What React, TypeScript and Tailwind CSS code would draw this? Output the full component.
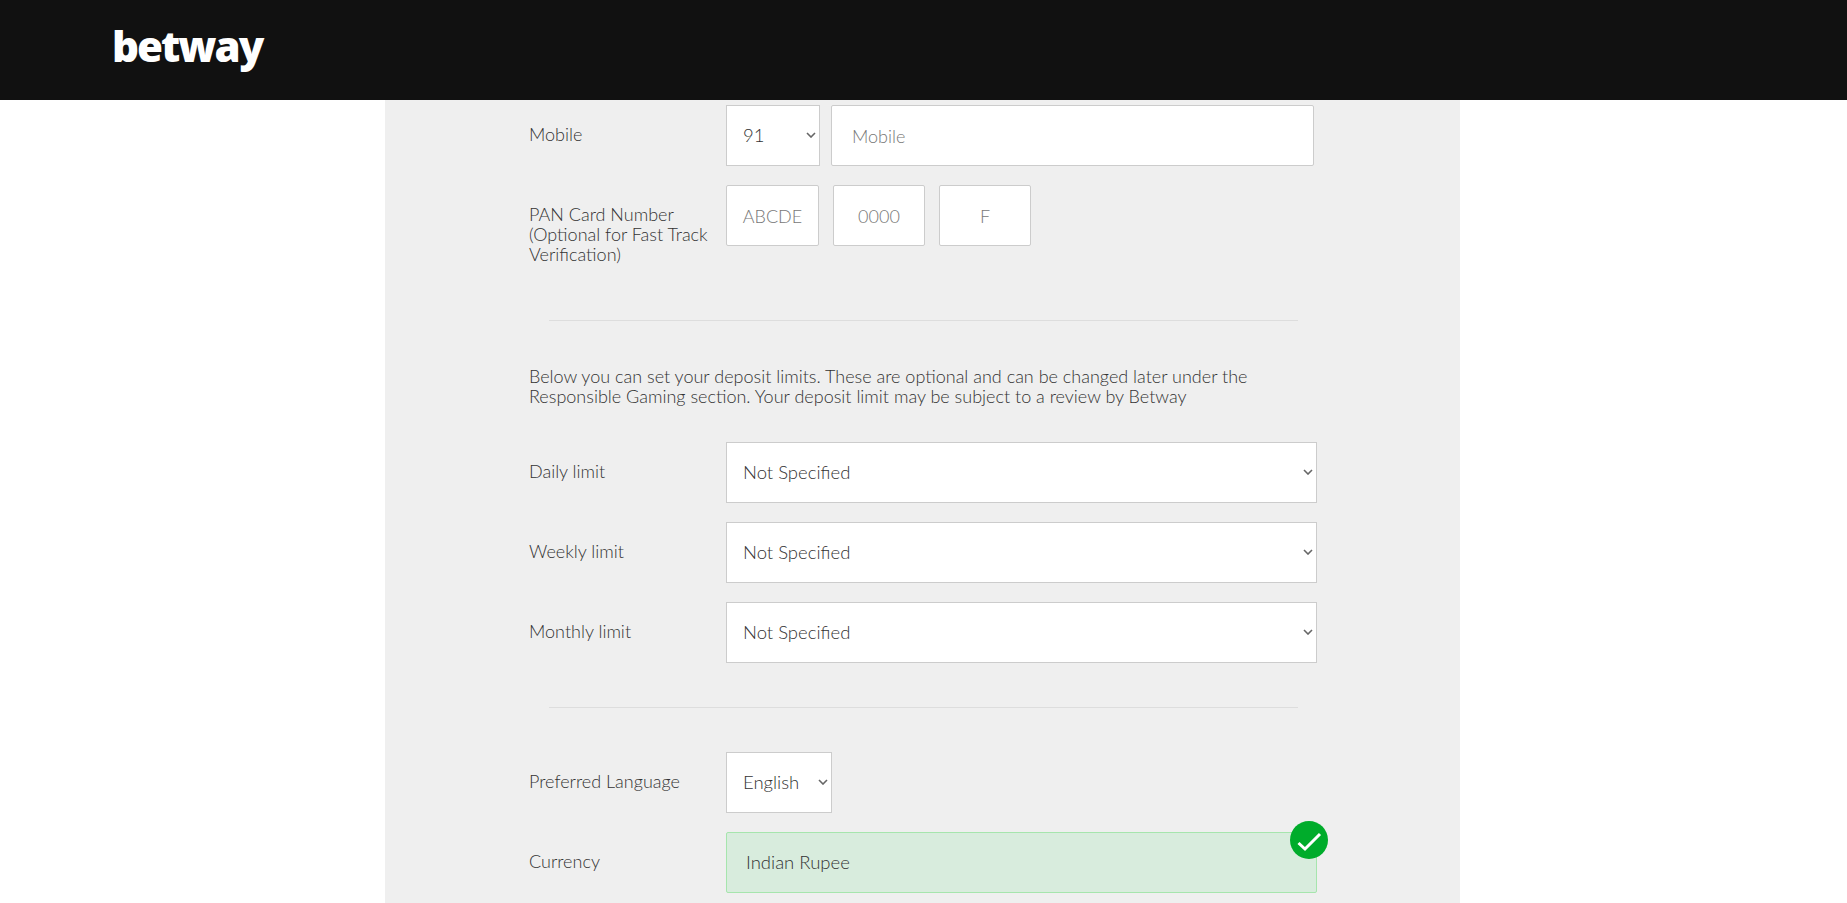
const fieldFont = "[font-family:'Lato',sans-serif] font-light";

const Field = ({ label, children }: { label: React.ReactNode; children: React.ReactNode }) => (
  <div className="flex mb-[19px]">
    <label className="w-[197px] shrink-0 pt-[19px] text-[18px] leading-[20px] text-[#333]">{label}</label>
    {children}
  </div>
);

const NativeSelect = ({ value, className }: { value: string; className: string }) => (
  <div className={`relative h-[61px] ${className}`}>
    <select
      defaultValue={value}
      className="w-full h-full appearance-none bg-white border border-[#ccc] pl-[16px] text-[18.5px] text-[#333] font-light"
    >
      <option>{value}</option>
    </select>
    <svg viewBox="0 0 10 6" className="absolute right-[4px] top-[27px] w-[10px] h-[6px]" fill="none" stroke="#666" strokeWidth="1.6">
      <path d="M1 1 L5 5 L9 1" />
    </svg>
  </div>
);

const TextInput = ({ placeholder, className }: { placeholder: string; className: string }) => (
  <input
    placeholder={placeholder}
    className={`h-[61px] bg-white border border-[#ccc] rounded-[2px] text-[18px] font-light text-[#333] placeholder:text-[#777] ${className}`}
  />
);

const App = () => {
  return (
    <div className={`h-[903px] overflow-hidden bg-white ${fieldFont}`}>
      <header className="h-[100px] bg-[#111] pl-[112px] pt-[16px]">
        <span className="block [font-family:'Noto_Sans',sans-serif] text-[42px] leading-[60px] font-black tracking-[-2px] text-white">betway</span>
      </header>

      <main className="ml-[385px] w-[1075px] h-[803px] bg-[#efefef] pl-[144px] pt-[5px]">
        <Field label="Mobile">
          <NativeSelect value="91" className="w-[94px]" />
          <TextInput placeholder="Mobile" className="ml-[11px] w-[483px] px-[20px]" />
        </Field>

        <Field label={<>PAN Card Number<br />(Optional for Fast Track<br />Verification)</>}>
          <div className="flex gap-[14px]">
            <TextInput placeholder="ABCDE" className="w-[93px] text-center" />
            <TextInput placeholder="0000" className="w-[92px] text-center" />
            <TextInput placeholder="F" className="w-[92px] text-center" />
          </div>
        </Field>

        <hr className="ml-[20px] w-[749px] mt-[56px] border-[#ddd]" />

        <p className="mt-[45px] w-[780px] text-[18px] leading-[20px] text-[#333]">
          Below you can set your deposit limits. These are optional and can be changed later under the<br />
          Responsible Gaming section. Your deposit limit may be subject to a review by Betway
        </p>

        <div className="mt-[36px]">
          {["Daily limit", "Weekly limit", "Monthly limit"].map((label) => (
            <Field key={label} label={label}>
              <NativeSelect value="Not Specified" className="w-[591px]" />
            </Field>
          ))}
        </div>

        <hr className="ml-[20px] w-[749px] mt-[44px] border-[#ddd]" />

        <div className="mt-[44px]">
          <Field label="Preferred Language">
            <NativeSelect value="English" className="w-[106px]" />
          </Field>
          <Field label="Currency">
            <div className="relative w-[591px] h-[61px] flex items-center pl-[19px] bg-[#d8ecdd] border border-[#a6e5ad] rounded-[2px] text-[18.5px] text-[#333]">
              Indian Rupee
              <span className="absolute -top-[12px] -right-[12px] w-[38px] h-[38px] rounded-full bg-[#00ac2b]">
                <svg viewBox="0 0 38 38" className="w-full h-full" fill="none" stroke="white" strokeWidth="3">
                  <path d="M8.5 22 L15 28 L30 13" />
                </svg>
              </span>
            </div>
          </Field>
        </div>
      </main>
    </div>
  );
};

export default App;
